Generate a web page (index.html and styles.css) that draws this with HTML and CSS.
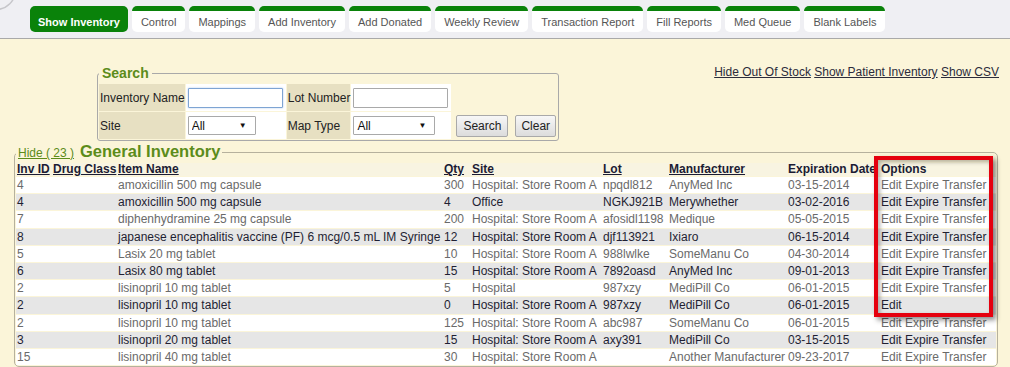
FILE: index.html
```html
<!DOCTYPE html>
<html lang="en">
<head>
  <meta charset="UTF-8">
  <title>Show Inventory</title>
  <link rel="stylesheet" href="styles.css">
</head>
<body>
  <div class="topbar">
    <svg class="logo" width="30" height="38" viewBox="0 0 30 38">
      <circle cx="-4" cy="-10" r="19.5" fill="none" stroke="#c6c6ca" stroke-width="1.5"/>
    </svg>
    <div class="tabs">
      <a class="tab active" href="#">Show Inventory</a>
      <a class="tab" href="#">Control</a>
      <a class="tab" href="#">Mappings</a>
      <a class="tab" href="#">Add Inventory</a>
      <a class="tab" href="#">Add Donated</a>
      <a class="tab" href="#">Weekly Review</a>
      <a class="tab" href="#">Transaction Report</a>
      <a class="tab" href="#">Fill Reports</a>
      <a class="tab" href="#">Med Queue</a>
      <a class="tab" href="#">Blank Labels</a>
    </div>
  </div>

  <div class="toolbar">
    <fieldset class="search">
      <legend>Search</legend>
      <table class="search-grid">
        <tr>
          <td class="label">Inventory Name</td>
          <td class="field"><input type="text" class="text-input focused"></td>
          <td class="label">Lot Number</td>
          <td class="field"><input type="text" class="text-input"></td>
          <td></td>
          <td></td>
        </tr>
        <tr>
          <td class="label">Site</td>
          <td class="field">
            <span class="select-wrap site-select"><select><option>All</option></select></span>
          </td>
          <td class="label">Map Type</td>
          <td class="field">
            <span class="select-wrap type-select"><select><option>All</option></select></span>
          </td>
          <td class="button-cell"><button class="btn">Search</button></td>
          <td class="button-cell last"><button class="btn">Clear</button></td>
        </tr>
      </table>
    </fieldset>

    <div class="page-links">
      <a href="#">Hide Out Of Stock</a> <a href="#">Show Patient Inventory</a> <a href="#">Show CSV</a>
    </div>
  </div>

  <fieldset class="inventory">
    <legend><a class="hide-link" href="#">Hide ( 23 )</a><span class="inv-title">General Inventory</span></legend>
    <div class="table-wrap">
      <table class="stock">
        <colgroup>
          <col style="width:36px">
          <col style="width:65px">
          <col style="width:326px">
          <col style="width:28px">
          <col style="width:131px">
          <col style="width:66px">
          <col style="width:119px">
          <col style="width:93px">
          <col style="width:116px">
        </colgroup>
        <thead>
          <tr>
            <th><a href="#">Inv ID</a></th>
            <th><a href="#">Drug Class</a></th>
            <th><a href="#">Item Name</a></th>
            <th><a href="#">Qty</a></th>
            <th><a href="#">Site</a></th>
            <th><a href="#">Lot</a></th>
            <th><a href="#">Manufacturer</a></th>
            <th>Expiration Date</th>
            <th>Options</th>
          </tr>
        </thead>
        <tbody>
          <tr><td>4</td><td></td><td>amoxicillin 500 mg capsule</td><td>300</td><td>Hospital: Store Room A</td><td>npqdl812</td><td>AnyMed Inc</td><td>03-15-2014</td><td>Edit Expire Transfer</td></tr>
          <tr><td>4</td><td></td><td>amoxicillin 500 mg capsule</td><td>4</td><td>Office</td><td>NGKJ921B</td><td>Merywhether</td><td>03-02-2016</td><td>Edit Expire Transfer</td></tr>
          <tr><td>7</td><td></td><td>diphenhydramine 25 mg capsule</td><td>200</td><td>Hospital: Store Room A</td><td>afosidl1198</td><td>Medique</td><td>05-05-2015</td><td>Edit Expire Transfer</td></tr>
          <tr><td>8</td><td></td><td>japanese encephalitis vaccine (PF) 6 mcg/0.5 mL IM Syringe</td><td>12</td><td>Hospital: Store Room A</td><td>djf113921</td><td>Ixiaro</td><td>06-15-2014</td><td>Edit Expire Transfer</td></tr>
          <tr><td>5</td><td></td><td>Lasix 20 mg tablet</td><td>10</td><td>Hospital: Store Room A</td><td>988lwlke</td><td>SomeManu Co</td><td>04-30-2014</td><td>Edit Expire Transfer</td></tr>
          <tr><td>6</td><td></td><td>Lasix 80 mg tablet</td><td>15</td><td>Hospital: Store Room A</td><td>7892oasd</td><td>AnyMed Inc</td><td>09-01-2013</td><td>Edit Expire Transfer</td></tr>
          <tr><td>2</td><td></td><td>lisinopril 10 mg tablet</td><td>5</td><td>Hospital</td><td>987xzy</td><td>MediPill Co</td><td>06-01-2015</td><td>Edit Expire Transfer</td></tr>
          <tr><td>2</td><td></td><td>lisinopril 10 mg tablet</td><td>0</td><td>Hospital: Store Room A</td><td>987xzy</td><td>MediPill Co</td><td>06-01-2015</td><td>Edit</td></tr>
          <tr><td>2</td><td></td><td>lisinopril 10 mg tablet</td><td>125</td><td>Hospital: Store Room A</td><td>abc987</td><td>SomeManu Co</td><td>06-01-2015</td><td>Edit Expire Transfer</td></tr>
          <tr><td>3</td><td></td><td>lisinopril 20 mg tablet</td><td>15</td><td>Hospital: Store Room A</td><td>axy391</td><td>MediPill Co</td><td>03-15-2015</td><td>Edit Expire Transfer</td></tr>
          <tr><td>15</td><td></td><td>lisinopril 40 mg tablet</td><td>30</td><td>Hospital: Store Room A</td><td></td><td>Another Manufacturer</td><td>09-23-2017</td><td>Edit Expire Transfer</td></tr>
        </tbody>
      </table>
      <!-- red highlight drawn over the options column -->
      <div class="highlight"></div>
    </div>
  </fieldset>
</body>
</html>
```

FILE: styles.css
```css
body {
  margin: 0;
  background: #fbf5d9;
  font-family: "Liberation Sans", Arial, sans-serif;
  font-size: 12px;
  color: #222;
}

/* top navigation */
.topbar {
  display: flex;
  height: 38px;
  background: #efeff3;
  border-bottom: 1px solid #a9a9a9;
  overflow: hidden;
}

.logo {
  flex: none;
  width: 30px;
}

.tabs {
  display: flex;
  gap: 4px;
}

.tab {
  margin-top: 6px;
  height: 26px;
  box-sizing: border-box;
  padding: 0 9px;
  border-top: 5px solid #0a820a;
  border-radius: 5px;
  background: #fff;
  color: #555;
  font-size: 11px;
  line-height: 22px;
  text-decoration: none;
  white-space: nowrap;
}

.tab.active {
  background: #0a820a;
  color: #fff;
  font-weight: bold;
  padding: 0 8px;
}

/* search + links */
.toolbar {
  display: flex;
  justify-content: space-between;
  align-items: flex-start;
  margin-top: 26px;
  padding: 0 11px 0 97px;
}

.search {
  margin: 0;
  padding: 2px 0 0;
  border: 1px solid #a9a9a9;
  border-radius: 3px;
}

.search legend {
  margin-left: 1px;
  padding: 0 3px;
  font-size: 14px;
  line-height: 16px;
  font-weight: bold;
  color: #5c8c1a;
}

.search-grid {
  border-spacing: 1px;
}

.search-grid td {
  height: 27px;
  padding: 0;
}

.search-grid .label {
  background: #e7e0c2;
  padding: 0 0 0 1px;
  white-space: nowrap;
}

.search-grid .field {
  background: #fff;
  padding: 0 3px 0 2px;
}

.search-grid .button-cell {
  padding: 0 2px 0 4px;
}

.search-grid .button-cell.last {
  padding: 0 1px 0 4px;
}

.text-input {
  display: block;
  width: 95px;
  height: 20px;
  box-sizing: border-box;
  border: 1px solid #a9a9a9;
  border-radius: 1px;
  background: #fff;
}

.text-input.focused {
  border-color: #7ea4d3;
  box-shadow: 0 0 2px #a9c6ea;
}

.select-wrap {
  position: relative;
  display: inline-block;
  vertical-align: middle;
}

.select-wrap select {
  display: block;
  height: 19px;
  box-sizing: border-box;
  padding: 0 0 0 3px;
  border: 1px solid #a9a9a9;
  border-radius: 1px;
  background: #fff;
  font-family: "Liberation Sans", Arial, sans-serif;
  font-size: 12px;
  color: #111;
  appearance: none;
  -webkit-appearance: none;
}

.select-wrap::after {
  content: "\25BC";
  position: absolute;
  right: 9px;
  top: 5px;
  font-size: 8px;
  color: #111;
}

.site-select select {
  width: 68px;
}

.type-select select {
  width: 82px;
}

.btn {
  height: 22px;
  padding: 0 6px;
  border: 1px solid #a9a9a9;
  border-radius: 2px;
  background: linear-gradient(#f7f7f7, #dcdcdc);
  font-family: "Liberation Sans", Arial, sans-serif;
  font-size: 12px;
  color: #222;
}

.last .btn {
  padding: 0 5px;
}

.page-links {
  line-height: 14px;
}

.page-links a {
  color: #2b2b3b;
}

/* inventory table */
.inventory {
  margin: 2px 12px 0 14px;
  padding: 0 1px;
  border: 1px solid #b6b19d;
  border-radius: 5px;
}

.inventory legend {
  padding: 0 2px;
  line-height: 17px;
}

.hide-link {
  color: #5c8c1a;
  font-size: 12px;
}

.inv-title {
  margin-left: 6px;
  font-size: 16.5px;
  font-weight: bold;
  color: #5c8c1a;
}

.table-wrap {
  position: relative;
}

.stock {
  width: 980px;
  table-layout: fixed;
  border-collapse: separate;
  border-spacing: 0 1px;
}

.stock th {
  padding: 0 1px;
  background: #f8f4e1;
  text-align: left;
  line-height: 13px;
  white-space: nowrap;
  overflow: hidden;
  color: #1c1c34;
}

.stock th a {
  color: #1c1c34;
}

.stock td {
  padding: 0 1px;
  line-height: 16.2px;
  white-space: nowrap;
  overflow: hidden;
}

.stock tbody tr:nth-child(odd) td {
  background: #fff;
  color: #6a6a6a;
}

.stock tbody tr:nth-child(even) td {
  background: #e6e6e6;
  color: #1f1f33;
}

.highlight {
  position: absolute;
  left: 858px;
  top: -6px;
  width: 119px;
  height: 161px;
  box-sizing: border-box;
  border: 4px solid #e5000e;
  box-shadow: 3px 3px 5px rgba(0, 0, 0, 0.45), inset 2px 2px 4px rgba(0, 0, 0, 0.3);
  pointer-events: none;
}
```
